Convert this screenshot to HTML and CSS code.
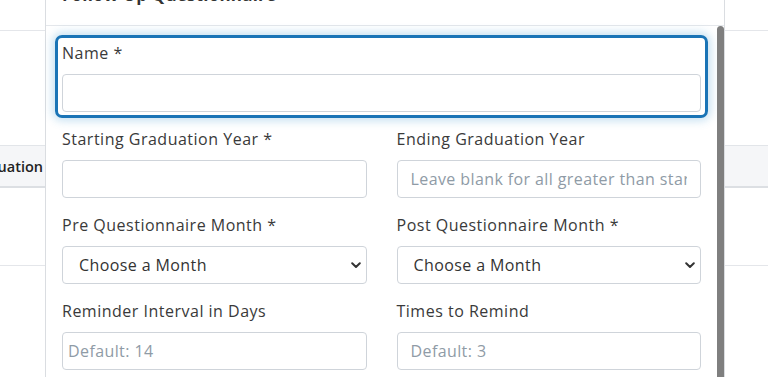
FILE: index.html
```html
<!DOCTYPE html>
<html>
<head>
<meta charset="utf-8">
<link rel="stylesheet" href="styles.css">
</head>
<body>
<div class="page">
  <div class="topbar"></div>
  <div class="thead">
    <div class="th"><span>Graduation</span></div>
  </div>
  <div class="trow"></div>
</div>

<div class="modal">
  <div class="modal-header">
    <h5 class="modal-title">Follow Up Questionnaire</h5>
  </div>
  <div class="modal-body">
    <div class="focus-group">
      <label class="label">Name *</label>
      <input class="input" type="text">
    </div>
    <div class="grid">
      <div class="group">
        <label class="label">Starting Graduation Year *</label>
        <input class="input" type="text">
      </div>
      <div class="group">
        <label class="label">Ending Graduation Year</label>
        <input class="input" type="text" placeholder="Leave blank for all greater than starting year">
      </div>
      <div class="group">
        <label class="label">Pre Questionnaire Month *</label>
        <div class="select-wrap">
          <select class="select"><option>Choose a Month</option></select>
          <svg class="chev" width="10" height="7" viewBox="0 0 10 7"><path d="M1.2 1.3 L5 5 L8.8 1.3" fill="none" stroke="#333" stroke-width="2" stroke-linecap="round" stroke-linejoin="round"/></svg>
        </div>
      </div>
      <div class="group">
        <label class="label">Post Questionnaire Month *</label>
        <div class="select-wrap">
          <select class="select"><option>Choose a Month</option></select>
          <svg class="chev" width="10" height="7" viewBox="0 0 10 7"><path d="M1.2 1.3 L5 5 L8.8 1.3" fill="none" stroke="#333" stroke-width="2" stroke-linecap="round" stroke-linejoin="round"/></svg>
        </div>
      </div>
      <div class="group">
        <label class="label">Reminder Interval in Days</label>
        <input class="input input-tight" type="text" placeholder="Default: 14">
      </div>
      <div class="group">
        <label class="label">Times to Remind</label>
        <input class="input" type="text" placeholder="Default: 3">
      </div>
    </div>
  </div>
  <div class="scrollbar"></div>
</div>
</body>
</html>
```

FILE: styles.css
```css
* { box-sizing: border-box; }
html, body { margin: 0; padding: 0; }
body {
  width: 768px;
  height: 377px;
  overflow: hidden;
  background: #fff;
  font-family: "Open Sans", "DejaVu Sans", sans-serif;
  color: #333;
  position: relative;
}
.page { width: 768px; }
.topbar { height: 31px; border-bottom: 1px solid #e4e6ea; }
.thead {
  margin-top: 114px;
  height: 43px;
  background: #f5f6f8;
  border-top: 1px solid #e2e5e9;
  border-bottom: 2px solid #dcdfe3;
  display: flex;
  align-items: center;
}
.th {
  width: 43px;
  display: flex;
  justify-content: flex-end;
  white-space: nowrap;
  font-weight: 600;
  font-size: 14.5px;
  color: #222;
}
.trow { height: 78px; border-bottom: 1px solid #e4e6ea; }

.modal {
  position: absolute;
  left: 45px;
  top: -36px;
  width: 680px;
  background: #fff;
  border-left: 1px solid #dadde1;
  border-right: 1px solid #dadde1;
  height: 420px;
}
.modal-header {
  padding: 16px 16px 15px;
  border-bottom: 1px solid #e4e7eb;
}
.modal-title {
  margin: 0;
  font-size: 17px;
  line-height: 30px;
  font-weight: 700;
  letter-spacing: 0.2px;
  color: #333;
}
.modal-body {
  padding: 9px 23px 16px 16px;
}
.focus-group {
  margin: 0 -7px 10px;
  border: 3px solid #1a74b6;
  border-radius: 7px;
  padding: 4px 4px 3px;
  box-shadow: 0 0 8px 3px rgba(60, 150, 210, 0.28);
}
.label {
  display: block;
  font-size: 16px;
  letter-spacing: 0.5px;
  line-height: 22px;
  margin-bottom: 10px;
  color: #3a3a3a;
}
.grid {
  display: grid;
  grid-template-columns: 1fr 1fr;
  column-gap: 30px;
  row-gap: 16px;
}
.input, .select {
  display: block;
  width: 100%;
  height: 38px;
  border: 1px solid #cfd4da;
  border-radius: 4px;
  background: #fff;
  font-family: inherit;
  font-size: 16px;
  letter-spacing: 0.4px;
  color: #333;
  padding: 0 13px;
  outline: none;
}
.input::placeholder { color: #8f9ba6; }
.input-tight { padding-left: 5px; }
.select-wrap { position: relative; }
.select {
  -webkit-appearance: none;
  appearance: none;
  padding-left: 16px;
}
.chev {
  position: absolute;
  right: 6px;
  top: 16px;
}
.scrollbar {
  position: absolute;
  right: 0;
  top: 62px;
  width: 7px;
  height: 400px;
  background: #7f7f7f;
  border-radius: 4px 4px 0 0;
}
```
